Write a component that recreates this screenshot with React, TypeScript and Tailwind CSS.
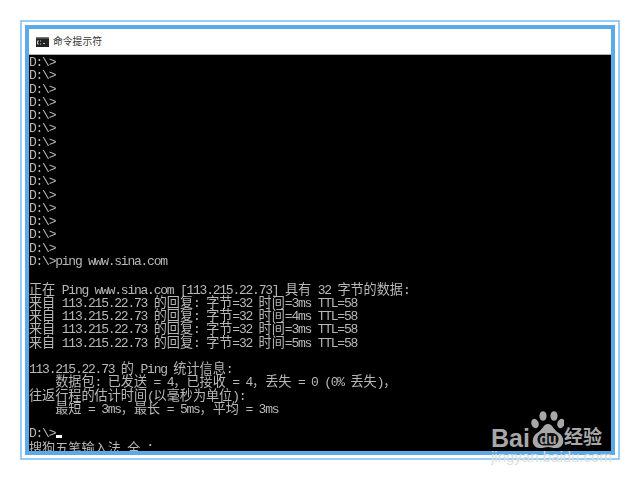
const lines: string[] = [
  ...Array(15).fill("D:\\>"),
  "D:\\>ping www.sina.com",
  "",
  "正在 Ping www.sina.com [113.215.22.73] 具有 32 字节的数据:",
  "来自 113.215.22.73 的回复: 字节=32 时间=3ms TTL=58",
  "来自 113.215.22.73 的回复: 字节=32 时间=4ms TTL=58",
  "来自 113.215.22.73 的回复: 字节=32 时间=3ms TTL=58",
  "来自 113.215.22.73 的回复: 字节=32 时间=5ms TTL=58",
  "",
  "113.215.22.73 的 Ping 统计信息:",
  "    数据包: 已发送 = 4，已接收 = 4，丢失 = 0 (0% 丢失)，",
  "往返行程的估计时间(以毫秒为单位):",
  "    最短 = 3ms，最长 = 5ms，平均 = 3ms",
  "",
];

function Line({ text }: { text: string }) {
  const parts = text.split(/([\u3000-\u9fff\uff00-\uffef]+)/);
  return (
    <div className="h-[13.27px] leading-[13.27px] whitespace-pre">
      {parts.map((p, i) =>
        /[\u3000-\u9fff\uff00-\uffef]/.test(p) ? (
          <span key={i} className="text-[13.12px] tracking-normal [font-family:'Noto_Sans_CJK_SC',sans-serif]">{p}</span>
        ) : (
          <span key={i}>{p}</span>
        )
      )}
    </div>
  );
}

export default function App() {
  return (
    <div className="relative w-[640px] h-[480px] bg-white pt-5 pl-5">
      <div className="w-[600px] h-[440px] border-2 border-[#9ccdf5] p-[3px] bg-white">
        <div className="w-full h-full border-4 border-[#5caae6] flex flex-col">
          <div className="h-[26px] shrink-0 bg-white border-b border-[#b0b0b0] flex items-center pl-[7px] gap-[4px]">
            <svg width="13" height="10" viewBox="0 0 13 10">
              <rect width="13" height="10" fill="#222" />
              <rect y="0" width="13" height="1.5" fill="#777" />
              <path d="M3 4 H1.5 V7 H3 M5 4 H4 M5 7 H4 M7 6.5 H9" stroke="#ddd" strokeWidth="0.9" fill="none" />
            </svg>
            <span className="text-[9.8px] text-[#333] [font-family:'Noto_Sans_CJK_SC',sans-serif]">命令提示符</span>
          </div>
          <div className="flex-1 bg-black overflow-hidden pt-[1px] text-[13px] tracking-[-1.24px] text-[#b8b8b8] [font-family:'Liberation_Mono',monospace] blur-[0.3px]">
            {lines.map((l, i) => (
              <Line key={i} text={l} />
            ))}
            <div className="h-[13.27px] leading-[13.27px] whitespace-pre relative">
              D:\&gt;
              <span className="absolute left-[27px] top-[8px] w-[6px] h-[3px] bg-white" />
            </div>
            <Line text="搜狗五笔输入法 全 ：" />
          </div>
        </div>
      </div>
      <div className="absolute left-[491px] top-[411px] w-[120px] flex flex-col">
        <div className="flex items-end h-[38px]">
          <span className="text-[25px] leading-[22px] font-bold text-[#a8a8a8] [font-family:'Liberation_Sans',sans-serif]">Bai</span>
          <svg width="34" height="38" viewBox="0 0 34 38" className="shrink-0">
            <g fill="#a8a8a8">
              <ellipse cx="5" cy="12.500" rx="3.6" ry="4.8" transform="rotate(-20 5 12.500)" />
              <ellipse cx="13" cy="5" rx="3.6" ry="4.8" />
              <ellipse cx="24" cy="5" rx="3.6" ry="4.8" />
              <ellipse cx="31" cy="12.500" rx="3.6" ry="4.8" transform="rotate(20 31 12.500)" />
              <path d="M18 13 C13 13 13 19 7 22 C1 26 1 36 9 37 C13 37.500 15 36 18 36 C21 36 23 37.500 27 37 C35 36 35 26 29 22 C23 19 23 13 18 13 Z" />
            </g>
            <rect x="7.500" y="22" width="21" height="12.500" rx="6" fill="#111" />
            <text x="18" y="33" textAnchor="middle" fontSize="14" fontWeight="700" fill="#a8a8a8" fontFamily="Liberation Sans">du</text>
          </svg>
          <span className="text-[19px] leading-[26px] font-bold text-[#a8a8a8] [font-family:'Noto_Sans_CJK_SC',sans-serif]">经验</span>
        </div>
        <span className="text-[15px] leading-[16px] text-[#dedede] [font-family:'Liberation_Sans',sans-serif]">jingyan.baidu.com</span>
      </div>
    </div>
  );
}
